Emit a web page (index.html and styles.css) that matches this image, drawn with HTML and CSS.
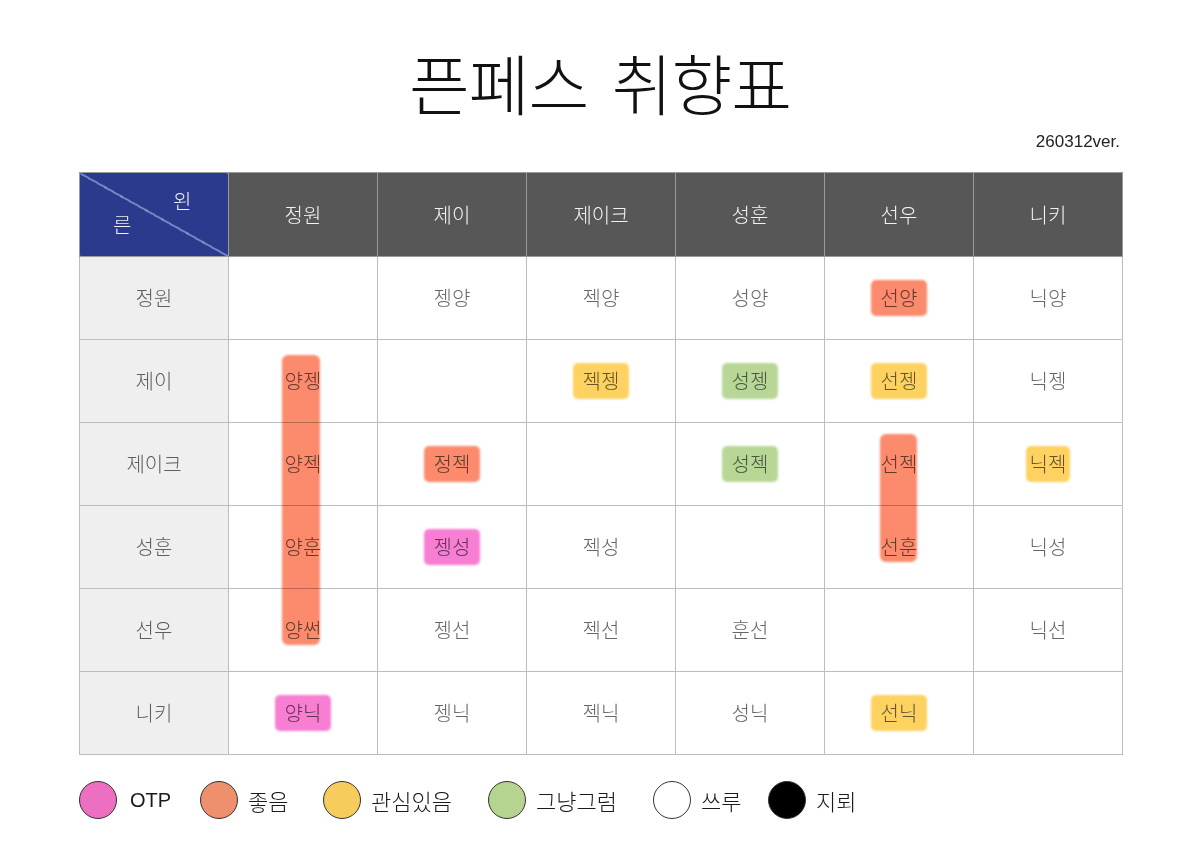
FILE: index.html
```html
<!DOCTYPE html>
<html lang="ko">
<head>
<meta charset="utf-8">
<title>픈페스 취향표</title>
<link rel="stylesheet" href="styles.css">
</head>
<body>
<div class="page">
  <h1 class="title">픈페스 취향표</h1>
  <div class="ver">260312ver.</div>
  <div class="board">
    <table class="grid">
      <tr class="head">
        <th class="corner"><span class="c-top">왼</span><span class="c-bot">른</span></th>
        <th>정원</th><th>제이</th><th>제이크</th><th>성훈</th><th>선우</th><th>니키</th>
      </tr>
      <tr>
        <th class="rowh">정원</th>
        <td></td><td>젱양</td><td>젝양</td><td>성양</td><td><span class="hl orange">선양</span></td><td>닉양</td>
      </tr>
      <tr>
        <th class="rowh">제이</th>
        <td>양젱</td><td></td><td><span class="hl yellow">젝젱</span></td><td><span class="hl green">성젱</span></td><td><span class="hl yellow">선젱</span></td><td>닉젱</td>
      </tr>
      <tr>
        <th class="rowh">제이크</th>
        <td>양젝</td><td><span class="hl orange">정젝</span></td><td></td><td><span class="hl green">성젝</span></td><td>선젝</td><td><span class="hl yellow narrow">닉젝</span></td>
      </tr>
      <tr>
        <th class="rowh">성훈</th>
        <td>양훈</td><td><span class="hl pink">젱성</span></td><td>젝성</td><td></td><td>선훈</td><td>닉성</td>
      </tr>
      <tr>
        <th class="rowh">선우</th>
        <td>양썬</td><td>젱선</td><td>젝선</td><td>훈선</td><td></td><td>닉선</td>
      </tr>
      <tr>
        <th class="rowh">니키</th>
        <td><span class="hl pink">양닉</span></td><td>젱닉</td><td>젝닉</td><td>성닉</td><td><span class="hl yellow">선닉</span></td><td></td>
      </tr>
    </table>
    <div class="stroke stroke-a"></div>
    <div class="stroke stroke-b"></div>
  </div>
  <ul class="legend">
    <li><span class="dot d-pink"></span><span class="lbl lat">OTP</span></li>
    <li><span class="dot d-orange"></span><span class="lbl">좋음</span></li>
    <li><span class="dot d-yellow"></span><span class="lbl">관심있음</span></li>
    <li><span class="dot d-green"></span><span class="lbl">그냥그럼</span></li>
    <li><span class="dot d-white"></span><span class="lbl">쓰루</span></li>
    <li><span class="dot d-black"></span><span class="lbl">지뢰</span></li>
  </ul>
</div>
</body>
</html>
```

FILE: styles.css
```css
* { box-sizing: border-box; }
html, body { margin: 0; padding: 0; background: #ffffff; }
body {
  width: 1200px;
  height: 849px;
  overflow: hidden;
  font-family: "Noto Sans CJK KR", "Noto Sans", sans-serif;
  color: #666666;
}
.page { padding: 0 79px 0 79px; }

.title {
  margin: 0;
  padding-top: 41px;
  height: 120px;
  text-align: center;
  font-size: 66px;
  line-height: 80px;
  font-weight: 300;
  color: #111111;
  letter-spacing: -1px;
  word-spacing: 6px;
}
.ver {
  text-align: right;
  font-family: "Liberation Sans", Arial, sans-serif;
  font-size: 17px;
  line-height: 20px;
  color: #222222;
  padding-right: 1px;
  margin-top: 12px;
  height: 40px;
}

.board { position: relative; width: 1042px; }
.grid {
  border-collapse: collapse;
  table-layout: fixed;
  width: 1042px;
}
.grid th, .grid td {
  border: 1px solid #bdbdbd;
  width: 149px;
  height: 83px;
  padding: 0;
  text-align: center;
  vertical-align: middle;
  font-size: 20px;
  font-weight: 300;
  line-height: 24px;
  color: #666666;
}
.grid .head th {
  height: 84px;
  background: #575757;
  color: #f2f2f2;
  border-color: #9a9a9a;
}
.grid .head th.corner {
  position: relative;
  background-color: #2b3a8c;
  background-image: linear-gradient(to bottom left, transparent calc(50% - 0.7px), #9aa3dc calc(50% - 0.7px), #9aa3dc calc(50% + 0.7px), transparent calc(50% + 0.7px));
}
.c-top { position: absolute; left: 93px; top: 16px; font-size: 20px; color: #f2f2f2; }
.c-bot { position: absolute; left: 33px; top: 40px; font-size: 20px; color: #f2f2f2; }
.grid th.rowh { background: #efefef; color: #5e5e5e; }

.hl {
  position: relative;
  display: inline-block;
  padding: 6px 10px;
  line-height: 24px;
}
.hl.narrow { padding: 6px 4px; }
.hl::after {
  content: "";
  position: absolute;
  inset: 0;
  border-radius: 5px;
  mix-blend-mode: multiply;
  filter: blur(0.8px);
}
.orange::after { background: #fb8b6c; }
.yellow::after { background: #fdd261; }
.green::after { background: #b8d797; }
.pink::after { background: #f77ed2; }

.stroke {
  position: absolute;
  background: #fb8b6c;
  border-radius: 6px;
  mix-blend-mode: multiply;
  filter: blur(0.8px);
}
.stroke-a { left: 203px; top: 183px; width: 38px; height: 290px; }
.stroke-b { left: 801px; top: 262px; width: 37px; height: 128px; }

.legend {
  list-style: none;
  margin: 25px 0 0 0;
  padding: 0;
  display: flex;
  align-items: center;
  height: 40px;
}
.legend li { display: flex; align-items: center; }
.dot {
  display: inline-block;
  width: 38px;
  height: 38px;
  border-radius: 50%;
  border: 1px solid #333333;
}
.lbl {
  font-size: 22px;
  font-weight: 300;
  color: #1a1a1a;
  margin-left: 10px;
  line-height: 24px;
}
.lat { font-family: "Liberation Sans", Arial, sans-serif; font-size: 20px; font-weight: 400; margin-left: 13px; }
.legend li:nth-child(1) { width: 121px; }
.legend li:nth-child(2) { width: 123px; }
.legend li:nth-child(3) { width: 165px; }
.legend li:nth-child(4) { width: 165px; }
.legend li:nth-child(5) { width: 115px; }
.d-pink { background: #ec6fc2; }
.d-orange { background: #ee8f6d; }
.d-yellow { background: #f6cd5d; }
.d-green { background: #b6d38f; }
.d-white { background: #ffffff; }
.d-black { background: #000000; }
```
